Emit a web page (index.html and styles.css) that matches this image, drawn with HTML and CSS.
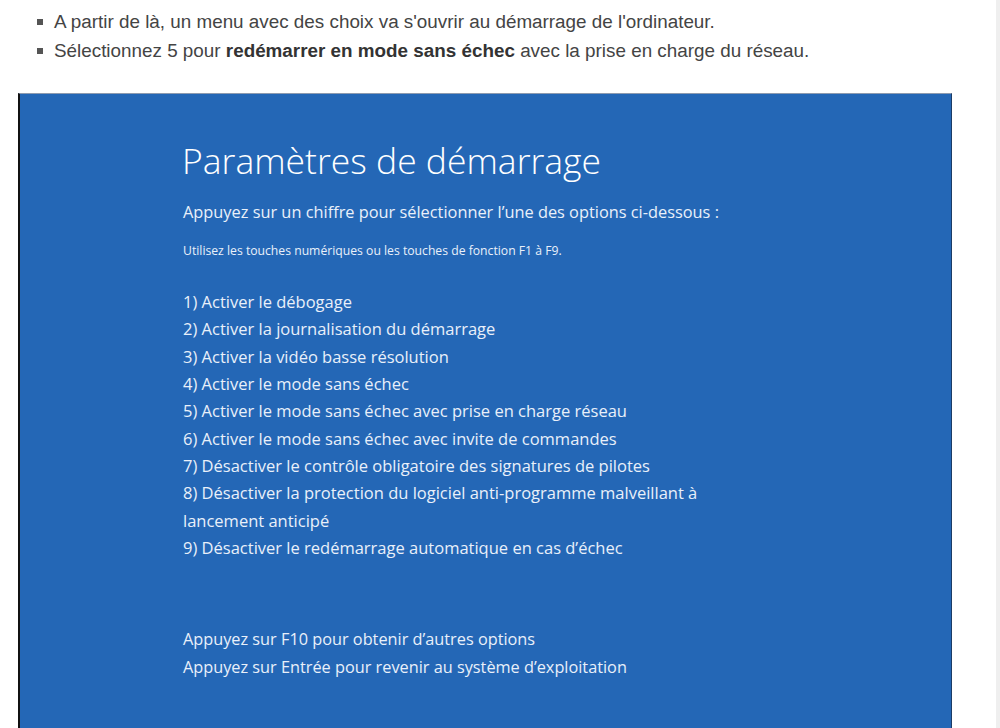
FILE: index.html
```html
<!DOCTYPE html>
<html lang="fr">
<head>
<meta charset="utf-8">
<link rel="stylesheet" href="styles.css">
</head>
<body>
<div class="page">
  <ul class="steps">
    <li>A partir de là, un menu avec des choix va s'ouvrir au démarrage de l'ordinateur.</li>
    <li>Sélectionnez 5 pour <strong>redémarrer en mode sans échec</strong> avec la prise en charge du réseau.</li>
  </ul>
  <div class="screen">
    <div class="inner">
      <h1 class="title">Paramètres de démarrage</h1>
      <p class="lead">Appuyez sur un chiffre pour sélectionner l’une des options ci-dessous :</p>
      <p class="hint">Utilisez les touches numériques ou les touches de fonction F1 à F9.</p>
      <ol class="options">
        <li>1) Activer le débogage</li>
        <li>2) Activer la journalisation du démarrage</li>
        <li>3) Activer la vidéo basse résolution</li>
        <li>4) Activer le mode sans échec</li>
        <li>5) Activer le mode sans échec avec prise en charge réseau</li>
        <li>6) Activer le mode sans échec avec invite de commandes</li>
        <li>7) Désactiver le contrôle obligatoire des signatures de pilotes</li>
        <li>8) Désactiver la protection du logiciel anti-programme malveillant à<br>lancement anticipé</li>
        <li>9) Désactiver le redémarrage automatique en cas d’échec</li>
      </ol>
      <div class="footer">
        <p>Appuyez sur F10 pour obtenir d’autres options</p>
        <p>Appuyez sur Entrée pour revenir au système d’exploitation</p>
      </div>
    </div>
  </div>
</div>
</body>
</html>
```
FILE: styles.css
```css
html, body {
  margin: 0;
  padding: 0;
  background: #ffffff;
  overflow: hidden;
}
.page {
  width: 996px;
  height: 728px;
  border-right: 4px solid #efefef;
  overflow: hidden;
}
.steps {
  margin: 0;
  padding: 7px 0 0 54px;
  list-style: none;
  font-family: "Liberation Sans", Arial, sans-serif;
  font-size: 18.85px;
  color: #444444;
}
.steps li {
  position: relative;
  line-height: 29px;
}
.steps li::before {
  content: "";
  position: absolute;
  left: -17px;
  top: 12px;
  width: 6px;
  height: 6px;
  background: #555555;
}
.steps strong {
  color: #333333;
}
.screen {
  margin: 28px 0 0 18px;
  width: 931px;
  height: 700px;
  background: #2467b6;
  border-left: 2px solid #111111;
  border-right: 1px solid #1c3c66;
  border-top: 1px solid #8d9bb0;
}
.inner {
  padding: 44px 0 0 163px;
  font-family: "Open Sans", "Noto Sans", sans-serif;
  color: #e9f0fa;
}
.title {
  margin: 0 0 0 -1px;
  font-size: 35.5px;
  font-weight: 300;
  line-height: 44px;
  color: #ffffff;
}
.lead {
  margin: 19px 0 0 0;
  font-size: 16.35px;
  line-height: 22px;
}
.hint {
  margin: 20px 0 0 0;
  font-size: 12.2px;
  line-height: 16px;
}
.options {
  margin: 29px 0 0 0;
  padding: 0;
  list-style: none;
  font-size: 16.5px;
  line-height: 27.33px;
}
.footer {
  margin-top: 65px;
  font-size: 16.3px;
  line-height: 27.33px;
}
.footer p {
  margin: 0;
}
```
